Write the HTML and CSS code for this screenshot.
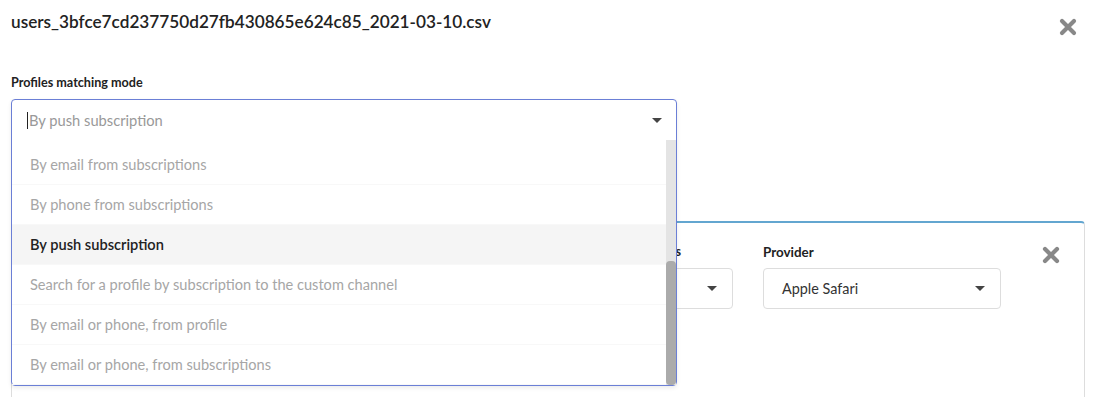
FILE: index.html
```html
<!DOCTYPE html>
<html lang="en">
<head>
    <meta charset="UTF-8">
    <title>Import profiles</title>
    <link rel="stylesheet" href="styles.css">
</head>
<body>
    <div class="modal">
        <div class="modal-header">
            <h1 class="modal-title">users_3bfce7cd237750d27fb430865e624c85_2021-03-10.csv</h1>
            <span class="close-icon big">
                <svg viewBox="0 0 18 18" width="18" height="18"><path d="M3 3 L15 15 M15 3 L3 15" stroke="#888" stroke-width="4.2" stroke-linecap="round"/></svg>
            </span>
        </div>

        <div class="field">
            <label class="field-label">Profiles matching mode</label>
            <div class="select-wrap">
                <div class="select open">
                    <div class="select-control">
                        <span class="caret"></span>
                        <span class="placeholder">By push subscription</span>
                        <span class="arrow"></span>
                    </div>
                    <div class="menu">
                        <div class="menu-list">
                            <div class="option">By email from subscriptions</div>
                            <div class="option">By phone from subscriptions</div>
                            <div class="option selected">By push subscription</div>
                            <div class="option">Search for a profile by subscription to the custom channel</div>
                            <div class="option">By email or phone, from profile</div>
                            <div class="option">By email or phone, from subscriptions</div>
                        </div>
                        <div class="scrollbar"><div class="thumb"></div></div>
                    </div>
                </div>
            </div>
        </div>

        <div class="card">
            <div class="card-row">
                <div class="card-field grow">
                    <label class="field-label end">Subscriptions</label>
                    <div class="select small">
                        <span class="value"></span>
                        <span class="arrow"></span>
                    </div>
                </div>
                <div class="card-field provider">
                    <label class="field-label">Provider</label>
                    <div class="select small">
                        <span class="value">Apple Safari</span>
                        <span class="arrow"></span>
                    </div>
                </div>
                <span class="close-icon">
                    <svg viewBox="0 0 18 18" width="18" height="18"><path d="M3 3 L15 15 M15 3 L3 15" stroke="#888" stroke-width="4.2" stroke-linecap="round"/></svg>
                </span>
            </div>
        </div>
    </div>
</body>
</html>
```

FILE: styles.css
```css
* {
    margin: 0;
    padding: 0;
    box-sizing: border-box;
}

body {
    background: #fff;
    color: #222;
    font-family: Lato, "Liberation Sans", sans-serif;
    overflow: hidden;
}

.modal {
    padding: 10px 10px 0 11px;
}

.modal-header {
    display: flex;
    justify-content: space-between;
    align-items: flex-start;
    height: 65px;
}

.modal-title {
    font-size: 17.2px;
    font-weight: 600;
    color: #222;
    line-height: 24px;
}

.close-icon {
    display: flex;
}

.close-icon.big {
    margin-top: 8px;
    margin-right: 8px;
}

.field-label {
    display: block;
    font-size: 12.6px;
    font-weight: 700;
    color: #222;
    line-height: 16px;
    margin-bottom: 8px;
}

.field-label.end {
    text-align: right;
    padding-right: 52px;
}

.select-wrap {
    position: relative;
    width: 666px;
    height: 41px;
}

.select.open {
    position: absolute;
    top: 0;
    left: 0;
    width: 666px;
    border: 1px solid #6b7fd6;
    border-radius: 4px;
    background: #fff;
    z-index: 2;
    box-shadow: 0 2px 4px rgba(0, 0, 0, 0.08);
}

.select-control {
    display: flex;
    align-items: center;
    height: 40px;
    padding: 0 14px 0 15px;
}

.caret {
    width: 1px;
    height: 17px;
    background: #222;
    margin-right: 1px;
}

.placeholder {
    flex: 1;
    font-size: 14.7px;
    color: #999;
}

.arrow {
    width: 0;
    height: 0;
    border-left: 5px solid transparent;
    border-right: 5px solid transparent;
    border-top: 5px solid #444;
}

.menu {
    display: flex;
    height: 245px;
}

.menu-list {
    flex: 1;
    padding-top: 5px;
}

.option {
    height: 40px;
    line-height: 39px;
    padding-left: 18px;
    font-size: 14.6px;
    color: #a6a6a6;
    border-bottom: 1px solid #f8f8f8;
    white-space: nowrap;
}

.option.selected {
    background: #f5f5f5;
    color: #222;
    font-weight: 600;
}

.scrollbar {
    width: 10px;
    background: #e4e4e4;
    display: flex;
    flex-direction: column;
    justify-content: flex-end;
}

.thumb {
    height: 124px;
    background: #ababab;
    border-radius: 4px;
}

.card {
    margin-top: 81px;
    width: 1074px;
    height: 176px;
    border: 1px solid #ddd;
    border-top: 2px solid #63a6d0;
    border-bottom: none;
    border-radius: 4px 4px 0 0;
    padding: 21px 24px 0 18px;
}

.card-row {
    display: flex;
    align-items: flex-start;
}

.card-field.grow {
    flex: 1;
    margin-right: 30px;
}

.card-field.provider {
    width: 238px;
}

.card-field.provider .field-label {
    font-size: 13.4px;
}

.card-row .close-icon {
    margin-left: 41px;
    margin-top: 2px;
}

.select.small {
    display: flex;
    align-items: center;
    height: 41px;
    margin-top: 1px;
    border: 1px solid #ddd;
    border-radius: 4px;
    padding: 0 15px 0 18px;
}

.select.small .value {
    flex: 1;
    font-size: 14.4px;
    color: #333;
}
```
